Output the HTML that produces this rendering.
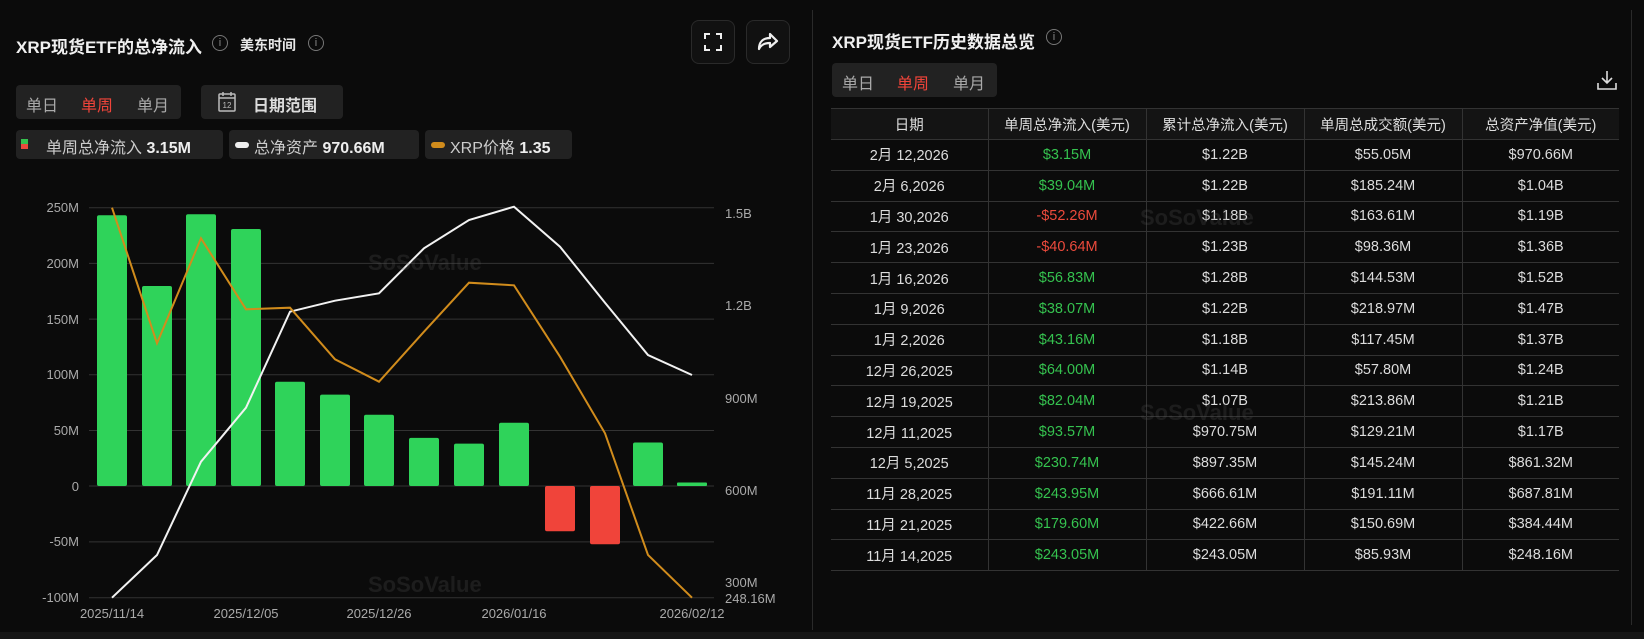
<!DOCTYPE html>
<html><head><meta charset="utf-8"><style>
*{margin:0;padding:0;box-sizing:border-box}
body{width:1644px;height:639px;background:#0b0b0b;color:#e8e8e8;font-family:"Liberation Sans","Noto Sans CJK SC",sans-serif;position:relative;overflow:hidden}
.a{position:absolute;white-space:nowrap}
.t{font-weight:bold;font-size:17px;color:#f0f0f0}
.ic{position:absolute;width:16px;height:16px;border:1px solid #777;border-radius:50%;color:#888;font-size:11px;text-align:center;line-height:14px}
.box{position:absolute;background:#222;border-radius:4px}
.seg{font-size:16px;color:#aaa}
.red{color:#f0443a}
.g{color:#35c24f}
.r{color:#ec4a3c}
table{position:absolute;left:831px;top:108px;width:788px;border-collapse:collapse;font-size:14.5px;color:#ddd}
td,th{border:1px solid #333;text-align:center;height:30.8px;font-weight:normal}
th{background:#141414;color:#ddd;height:31px}
tr td:first-child,tr th:first-child{border-left:none}
tr td:last-child,tr th:last-child{border-right:none}
.yl{position:absolute;font-size:13px;color:#aaa;text-align:right;width:60px}
.yr{position:absolute;font-size:13px;color:#aaa}
.xl{position:absolute;font-size:13px;color:#aaa;transform:translateX(-50%)}
</style></head><body>
<div class="a" style="left:812px;top:10px;width:1px;height:620px;background:#2a2a2a"></div>
<div class="a" style="left:1631px;top:10px;width:1px;height:615px;background:#2a2a2a"></div>
<div class="a" style="left:0;top:632px;width:1644px;height:7px;background:#161616"></div>

<div class="a t" style="left:16px;top:33px">XRP现货ETF的总净流入</div>
<div class="ic" style="left:212px;top:35px">i</div>
<div class="a" style="left:240px;top:35px;font-size:14px;font-weight:bold;color:#e8e8e8">美东时间</div>
<div class="ic" style="left:308px;top:35px">i</div>

<div class="a" style="left:691px;top:20px;width:44px;height:44px;border:1px solid #2a2a2a;border-radius:8px;background:#111"></div>
<svg class="a" style="left:703px;top:32px" width="20" height="20" viewBox="0 0 20 20" fill="none" stroke="#eee" stroke-width="2"><path d="M2 7V2h5M13 2h5v5M18 13v5h-5M7 18H2v-5"/></svg>
<div class="a" style="left:746px;top:20px;width:44px;height:44px;border:1px solid #2a2a2a;border-radius:8px;background:#111"></div>
<svg class="a" style="left:756px;top:31px" width="24" height="22" viewBox="0 0 24 22" fill="none" stroke="#eee" stroke-width="2.2" stroke-linejoin="round"><path d="M14 3l7 7-7 6v-4C8 12 5 14 3 18 3 11 7 7 14 7z"/></svg>

<div class="box" style="left:16px;top:85px;width:165px;height:34px"></div>
<div class="a seg" style="left:26px;top:92px">单日</div>
<div class="a seg red" style="left:81px;top:92px">单周</div>
<div class="a seg" style="left:137px;top:92px">单月</div>
<div class="box" style="left:201px;top:85px;width:142px;height:34px"></div>
<svg class="a" style="left:218px;top:91px" width="18" height="21" viewBox="0 0 18 21" fill="none" stroke="#bbb" stroke-width="1.5"><rect x="1" y="3" width="16" height="17" rx="1"/><path d="M5 1v4M13 1v4M1 7h16"/><text x="9" y="17" font-size="8" fill="#bbb" stroke="none" text-anchor="middle" font-family="Liberation Sans">12</text></svg>
<div class="a" style="left:253px;top:92px;font-size:16px;font-weight:bold;color:#ddd">日期范围</div>

<div class="box" style="left:16px;top:130px;width:207px;height:29px"></div>
<div class="a" style="left:21px;top:139px;width:7px;height:5px;background:#35c24f"></div>
<div class="a" style="left:21px;top:144px;width:7px;height:5px;background:#ec4a3c"></div>
<div class="a" style="left:46px;top:134px;font-size:16px;color:#ccc">单周总净流入 <b style="color:#eee">3.15M</b></div>
<div class="box" style="left:229px;top:130px;width:190px;height:29px"></div>
<div class="a" style="left:235px;top:142px;width:14px;height:6px;background:#eee;border-radius:3px"></div>
<div class="a" style="left:254px;top:134px;font-size:16px;color:#ccc">总净资产 <b style="color:#eee">970.66M</b></div>
<div class="box" style="left:425px;top:130px;width:147px;height:29px"></div>
<div class="a" style="left:431px;top:142px;width:14px;height:6px;background:#d18c1c;border-radius:3px"></div>
<div class="a" style="left:450px;top:134px;font-size:16px;color:#ccc">XRP价格 <b style="color:#eee">1.35</b></div>

<svg class="a" style="left:0;top:0" width="812" height="639">
<g stroke="#333" stroke-width="1">
<line x1="89" y1="207.7" x2="714" y2="207.7"/><line x1="89" y1="263.4" x2="714" y2="263.4"/><line x1="89" y1="319.1" x2="714" y2="319.1"/><line x1="89" y1="374.8" x2="714" y2="374.8"/><line x1="89" y1="430.5" x2="714" y2="430.5"/><line x1="89" y1="486" x2="714" y2="486"/><line x1="89" y1="541.9" x2="714" y2="541.9"/><line x1="89" y1="597.7" x2="714" y2="597.7"/>
</g>
<g fill="#2fd35a">
<rect x="97" y="215.2" width="30" height="270.8" rx="2"/>
<rect x="142" y="286" width="30" height="200" rx="2"/>
<rect x="186" y="214.2" width="30" height="271.8" rx="2"/>
<rect x="231" y="229" width="30" height="257" rx="2"/>
<rect x="275" y="381.8" width="30" height="104.2" rx="2"/>
<rect x="320" y="394.6" width="30" height="91.4" rx="2"/>
<rect x="364" y="414.7" width="30" height="71.3" rx="2"/>
<rect x="409" y="437.9" width="30" height="48.1" rx="2"/>
<rect x="454" y="443.6" width="30" height="42.4" rx="2"/>
<rect x="499" y="422.7" width="30" height="63.3" rx="2"/>
<rect x="633" y="442.5" width="30" height="43.5" rx="2"/>
<rect x="677" y="482.5" width="30" height="3.5" rx="1"/>
</g>
<g fill="#f0443a">
<rect x="545" y="486" width="30" height="45.3" rx="2"/>
<rect x="590" y="486" width="30" height="58.2" rx="2"/>
</g>
<polyline fill="none" stroke="#f2f2f2" stroke-width="2" points="112,597.7 157,555 201,461.7 246,407.7 290,311.7 335,300.7 379,293.3 424,248.3 469,220 514,206.7 560,246.7 605,302.7 648,355 692,375"/>
<polyline fill="none" stroke="#d18c1c" stroke-width="2" points="112,207.7 157,343.3 201,238.3 246,309.3 290,307.7 335,359.3 379,381.7 424,331.7 469,282.7 514,285.3 560,356.7 605,433.3 648,555 692,597.7"/>
<g fill="#555" opacity="0.25" font-family="Liberation Sans" font-weight="bold">
<text x="368" y="270" font-size="22">SoSoValue</text>
<text x="368" y="592" font-size="22">SoSoValue</text>
</g>
</svg>
<div class="yl" style="left:19px;top:200px">250M</div>
<div class="yl" style="left:19px;top:256px">200M</div>
<div class="yl" style="left:19px;top:312px">150M</div>
<div class="yl" style="left:19px;top:367px">100M</div>
<div class="yl" style="left:19px;top:423px">50M</div>
<div class="yl" style="left:19px;top:479px">0</div>
<div class="yl" style="left:19px;top:534px">-50M</div>
<div class="yl" style="left:19px;top:590px">-100M</div>
<div class="yr" style="left:725px;top:206px">1.5B</div>
<div class="yr" style="left:725px;top:298px">1.2B</div>
<div class="yr" style="left:725px;top:391px">900M</div>
<div class="yr" style="left:725px;top:483px">600M</div>
<div class="yr" style="left:725px;top:575px">300M</div>
<div class="yr" style="left:725px;top:591px">248.16M</div>
<div class="xl" style="left:112px;top:606px">2025/11/14</div>
<div class="xl" style="left:246px;top:606px">2025/12/05</div>
<div class="xl" style="left:379px;top:606px">2025/12/26</div>
<div class="xl" style="left:514px;top:606px">2026/01/16</div>
<div class="xl" style="left:692px;top:606px">2026/02/12</div>

<div class="a t" style="left:832px;top:28px">XRP现货ETF历史数据总览</div>
<div class="ic" style="left:1046px;top:29px">i</div>
<div class="box" style="left:832px;top:63px;width:165px;height:34px"></div>
<div class="a seg" style="left:842px;top:70px">单日</div>
<div class="a seg red" style="left:897px;top:70px">单周</div>
<div class="a seg" style="left:953px;top:70px">单月</div>
<svg class="a" style="left:1596px;top:69px" width="22" height="22" viewBox="0 0 22 22" fill="none" stroke="#ddd" stroke-width="1.6"><path d="M11 2v12M6 9l5 5 5-5M2 14v6h18v-6"/></svg>

<table>
<tr><th style="width:157px">日期</th><th style="width:158px">单周总净流入(美元)</th><th style="width:158px">累计总净流入(美元)</th><th style="width:158px">单周总成交额(美元)</th><th>总资产净值(美元)</th></tr>
<tr><td>2月 12,2026</td><td class="g">$3.15M</td><td>$1.22B</td><td>$55.05M</td><td>$970.66M</td></tr>
<tr><td>2月 6,2026</td><td class="g">$39.04M</td><td>$1.22B</td><td>$185.24M</td><td>$1.04B</td></tr>
<tr><td>1月 30,2026</td><td class="r">-$52.26M</td><td>$1.18B</td><td>$163.61M</td><td>$1.19B</td></tr>
<tr><td>1月 23,2026</td><td class="r">-$40.64M</td><td>$1.23B</td><td>$98.36M</td><td>$1.36B</td></tr>
<tr><td>1月 16,2026</td><td class="g">$56.83M</td><td>$1.28B</td><td>$144.53M</td><td>$1.52B</td></tr>
<tr><td>1月 9,2026</td><td class="g">$38.07M</td><td>$1.22B</td><td>$218.97M</td><td>$1.47B</td></tr>
<tr><td>1月 2,2026</td><td class="g">$43.16M</td><td>$1.18B</td><td>$117.45M</td><td>$1.37B</td></tr>
<tr><td>12月 26,2025</td><td class="g">$64.00M</td><td>$1.14B</td><td>$57.80M</td><td>$1.24B</td></tr>
<tr><td>12月 19,2025</td><td class="g">$82.04M</td><td>$1.07B</td><td>$213.86M</td><td>$1.21B</td></tr>
<tr><td>12月 11,2025</td><td class="g">$93.57M</td><td>$970.75M</td><td>$129.21M</td><td>$1.17B</td></tr>
<tr><td>12月 5,2025</td><td class="g">$230.74M</td><td>$897.35M</td><td>$145.24M</td><td>$861.32M</td></tr>
<tr><td>11月 28,2025</td><td class="g">$243.95M</td><td>$666.61M</td><td>$191.11M</td><td>$687.81M</td></tr>
<tr><td>11月 21,2025</td><td class="g">$179.60M</td><td>$422.66M</td><td>$150.69M</td><td>$384.44M</td></tr>
<tr><td>11月 14,2025</td><td class="g">$243.05M</td><td>$243.05M</td><td>$85.93M</td><td>$248.16M</td></tr>
</table>
<div class="a" style="left:1140px;top:205px;font-size:22px;font-weight:bold;color:#555;opacity:.25">SoSoValue</div>
<div class="a" style="left:1140px;top:400px;font-size:22px;font-weight:bold;color:#555;opacity:.25">SoSoValue</div>
</body></html>
